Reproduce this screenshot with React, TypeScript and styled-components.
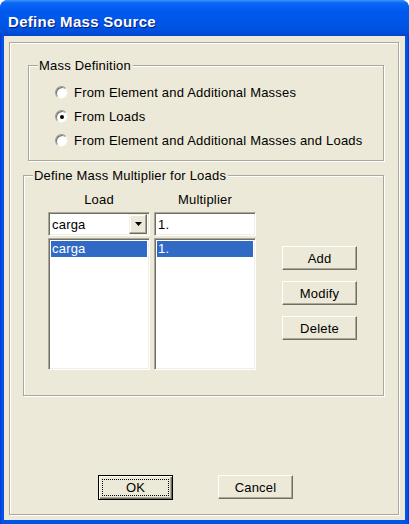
import styled, { createGlobalStyle } from 'styled-components';

const GlobalStyle = createGlobalStyle`
  html, body {
    margin: 0;
    padding: 0;
    background: #ffffff;
  }
  body {
    font-family: "Liberation Sans", Arial, sans-serif;
    font-size: 13px;
    letter-spacing: 0.2px;
    color: #000000;
  }
`;

const StyledWindow = styled.div`
  width: 409px;
  height: 524px;
  display: flex;
  flex-direction: column;
  background: linear-gradient(
    to right,
    #0831d9 0,
    #0055e5 2px,
    #0055e5 calc(100% - 2px),
    #0831d9 100%
  );
  border-radius: 8px 8px 0 0;
  overflow: hidden;
`;

const StyledTitleBar = styled.div`
  height: 36px;
  box-sizing: border-box;
  padding: 6px 0 0 8px;
  display: flex;
  align-items: center;
  background: linear-gradient(
    to bottom,
    #3d95ff 0,
    #0a66f5 3px,
    #0058ee 12px,
    #0055e5 26px,
    #004dd9 33px,
    #0043c8 36px
  );
  color: #ffffff;
  font-family: "Liberation Sans", Arial, sans-serif;
  font-weight: bold;
  font-size: 15px;
  letter-spacing: 0.3px;
  text-shadow: 1px 1px 0 #0a1b7a;
`;

const StyledBody = styled.div`
  flex: 1;
  margin: 0 4px 4px;
  padding: 6px 6px 5px 5px;
  background: #ece9d8;
  display: flex;
`;

const StyledPanel = styled.div`
  flex: 1;
  display: flex;
  flex-direction: column;
  border: 1px solid #aca899;
  box-shadow: inset 1px 1px 0 #ffffff, 1px 1px 0 #ffffff;
`;

const StyledGroup = styled.fieldset<{ $left: number; $top: number }>`
  margin: ${({ $top }) => $top}px 14px 0 ${({ $left }) => $left}px;
  padding: 0;
  border: 1px solid #aca899;
  box-shadow: inset 1px 1px 0 #ffffff, 1px 1px 0 #ffffff;
  min-width: 0;
`;

const StyledLegend = styled.legend<{ $offset: number }>`
  margin-left: ${({ $offset }) => $offset}px;
  padding: 0 2px 0 1px;
  line-height: 15px;
  background: #ece9d8;
`;

const StyledRadioList = styled.div`
  display: flex;
  flex-direction: column;
  padding: 7px 0 8px 26px;
`;

const StyledRadioRow = styled.label`
  height: 24px;
  display: flex;
  align-items: center;
  gap: 6px;
`;

const StyledRadio = styled.span<{ $checked?: boolean }>`
  width: 13px;
  height: 13px;
  box-sizing: border-box;
  border-radius: 50%;
  background: #ffffff;
  border: 1px solid;
  border-color: #9d9a8c #f1efe2 #f1efe2 #9d9a8c;
  box-shadow: inset 1px 1px 0 #716f64;
  display: flex;
  align-items: center;
  justify-content: center;

  &::after {
    content: '';
    width: 4px;
    height: 4px;
    border-radius: 50%;
    background: #000000;
    display: ${({ $checked }) => ($checked ? 'block' : 'none')};
    margin: 1px 0 0 1px;
  }
`;

const StyledLoadsArea = styled.div`
  display: flex;
  align-items: flex-start;
  padding: 9px 0 25px 24px;
`;

const StyledColumn = styled.div`
  width: 102px;
  display: flex;
  flex-direction: column;
  margin-right: 4px;
`;

const StyledColumnHeader = styled.div`
  height: 15px;
  line-height: 15px;
  text-align: center;
  margin-bottom: 5px;
`;

const StyledSunken = styled.div`
  box-sizing: border-box;
  background: #ffffff;
  border: 1px solid;
  border-color: #aca899 #ffffff #ffffff #aca899;
  box-shadow: inset 1px 1px 0 #716f64, inset -1px -1px 0 #f1efe2;
`;

const StyledCombo = styled(StyledSunken)`
  height: 24px;
  display: flex;
  align-items: center;
  justify-content: space-between;
  padding: 0 2px 0 3px;
`;

const StyledComboButton = styled.span`
  width: 18px;
  height: 20px;
  box-sizing: border-box;
  background: #ece9d8;
  border: 1px solid;
  border-color: #f1efe2 #716f64 #716f64 #f1efe2;
  box-shadow: inset -1px -1px 0 #aca899, inset 1px 1px 0 #ffffff;
  display: flex;
  align-items: center;
  justify-content: center;
`;

const StyledTextBox = styled(StyledSunken)`
  height: 24px;
  display: flex;
  align-items: center;
  padding-left: 3px;
`;

const StyledList = styled(StyledSunken)`
  height: 132px;
  margin-top: 2px;
  padding: 2px;
`;

const StyledListItem = styled.div<{ $selected?: boolean }>`
  height: 16px;
  line-height: 16px;
  padding-left: 1px;
  background: ${({ $selected }) => ($selected ? '#316ac5' : 'transparent')};
  color: ${({ $selected }) => ($selected ? '#ffffff' : '#000000')};
`;

const StyledButtonColumn = styled.div`
  display: flex;
  flex-direction: column;
  gap: 11px;
  margin: 54px 0 0 22px;
`;

const StyledButton = styled.button<{ $default?: boolean }>`
  width: 75px;
  height: ${({ $default }) => ($default ? 25 : 24)}px;
  box-sizing: border-box;
  padding: 0;
  position: relative;
  font-family: "Liberation Sans", Arial, sans-serif;
  font-size: 13px;
  letter-spacing: 0.2px;
  color: #000000;
  background: #ece9d8;
  border: 1px solid;
  border-color: ${({ $default }) =>
    $default ? '#000000' : '#ffffff #716f64 #716f64 #ffffff'};
  box-shadow: ${({ $default }) =>
    $default
      ? 'inset 1px 1px 0 #ffffff, inset -1px -1px 0 #716f64, inset -2px -2px 0 #aca899'
      : 'inset -1px -1px 0 #aca899'};

  &::after {
    content: '';
    position: absolute;
    inset: 3px;
    border: 1px dotted #000000;
    display: ${({ $default }) => ($default ? 'block' : 'none')};
  }
`;

const StyledFooter = styled.div`
  display: flex;
  gap: 45px;
  margin-top: auto;
  padding: 0 0 14px 88px;
`;

const DownArrow = () => (
  <svg width="7" height="4" viewBox="0 0 7 4">
    <polygon points="0,0 7,0 3.5,4" fill="#000000" />
  </svg>
);

export default function App() {
  return (
    <>
      <GlobalStyle />
      <StyledWindow>
        <StyledTitleBar>Define Mass Source</StyledTitleBar>
        <StyledBody>
          <StyledPanel>
            <StyledGroup $left={18} $top={15}>
              <StyledLegend $offset={9}>Mass Definition</StyledLegend>
              <StyledRadioList>
                <StyledRadioRow>
                  <StyledRadio />
                  From Element and Additional Masses
                </StyledRadioRow>
                <StyledRadioRow>
                  <StyledRadio $checked />
                  From Loads
                </StyledRadioRow>
                <StyledRadioRow>
                  <StyledRadio />
                  From Element and Additional Masses and Loads
                </StyledRadioRow>
              </StyledRadioList>
            </StyledGroup>
            <StyledGroup $left={13} $top={7}>
              <StyledLegend $offset={9}>Define Mass Multiplier for Loads</StyledLegend>
              <StyledLoadsArea>
                <StyledColumn>
                  <StyledColumnHeader>Load</StyledColumnHeader>
                  <StyledCombo>
                    carga
                    <StyledComboButton>
                      <DownArrow />
                    </StyledComboButton>
                  </StyledCombo>
                  <StyledList>
                    <StyledListItem $selected>carga</StyledListItem>
                  </StyledList>
                </StyledColumn>
                <StyledColumn>
                  <StyledColumnHeader>Multiplier</StyledColumnHeader>
                  <StyledTextBox>1.</StyledTextBox>
                  <StyledList>
                    <StyledListItem $selected>1.</StyledListItem>
                  </StyledList>
                </StyledColumn>
                <StyledButtonColumn>
                  <StyledButton>Add</StyledButton>
                  <StyledButton>Modify</StyledButton>
                  <StyledButton>Delete</StyledButton>
                </StyledButtonColumn>
              </StyledLoadsArea>
            </StyledGroup>
            <StyledFooter>
              <StyledButton $default>OK</StyledButton>
              <StyledButton>Cancel</StyledButton>
            </StyledFooter>
          </StyledPanel>
        </StyledBody>
      </StyledWindow>
    </>
  );
}
